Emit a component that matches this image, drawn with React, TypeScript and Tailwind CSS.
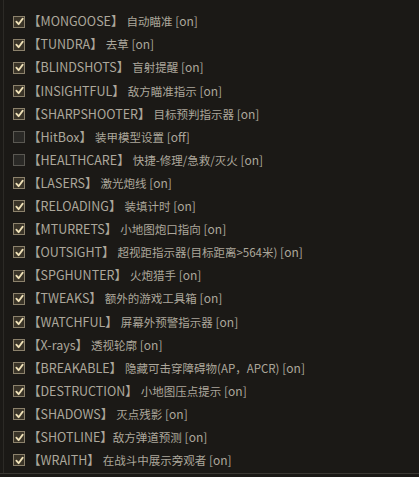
import React from "react";

type Item = { tag: string; label: string; on: boolean; state?: string; tight?: boolean };

const items: Item[] = [
  { tag: "MONGOOSE", label: "自动瞄准", on: true },
  { tag: "TUNDRA", label: "去草", on: true },
  { tag: "BLINDSHOTS", label: "盲射提醒", on: true },
  { tag: "INSIGHTFUL", label: "敌方瞄准指示", on: true },
  { tag: "SHARPSHOOTER", label: "目标预判指示器", on: true },
  { tag: "HitBox", label: "装甲模型设置", on: false, state: "off" },
  { tag: "HEALTHCARE", label: "快捷-修理/急救/灭火", on: false },
  { tag: "LASERS", label: "激光炮线", on: true },
  { tag: "RELOADING", label: "装填计时", on: true },
  { tag: "MTURRETS", label: "小地图炮口指向", on: true },
  { tag: "OUTSIGHT", label: "超视距指示器(目标距离>564米)", on: true },
  { tag: "SPGHUNTER", label: "火炮猎手", on: true },
  { tag: "TWEAKS", label: "额外的游戏工具箱", on: true },
  { tag: "WATCHFUL", label: "屏幕外预警指示器", on: true },
  { tag: "X-rays", label: "透视轮廓", on: true },
  { tag: "BREAKABLE", label: "隐藏可击穿障碍物(AP，APCR)", on: true },
  { tag: "DESTRUCTION", label: "小地图压点提示", on: true },
  { tag: "SHADOWS", label: "灭点残影", on: true },
  { tag: "SHOTLINE", label: "敌方弹道预测", on: true, tight: true },
  { tag: "WRAITH", label: "在战斗中展示旁观者", on: true },
];

const cjk = { fontFamily: '"Noto Sans CJK SC", sans-serif' };

function Box({ on }: { on: boolean }) {
  if (!on) {
    return <span className="w-3 h-3 shrink-0 border border-[#5a5852] bg-[#2a2926]" />;
  }
  return (
    <span className="w-3 h-3 shrink-0 border border-[#8c826c] bg-[#3a3428] flex items-center justify-center">
      <svg width="9" height="9" viewBox="0 0 10 10">
        <path d="M1.5 5.2 L4 8 L8.6 1.8" fill="none" stroke="#f0e2b8" strokeWidth="2" strokeLinecap="round" strokeLinejoin="round" />
      </svg>
    </span>
  );
}

export default function App() {
  return (
    <div
      className="w-[419px] h-[477px] bg-[#1b1916] relative overflow-hidden text-[12.5px] text-[#aca79b]"
      style={{ fontFamily: '"Liberation Sans Narrow", "Noto Sans CJK SC", sans-serif' }}
    >
      <div className="absolute left-[3px] top-0 bottom-[4px] w-px bg-[#2c2a26]" />
      <div className="absolute left-0 right-0 bottom-[3px] h-px bg-[#3a3833]" />
      <div className="flex flex-col pt-[10px] pl-[13px]">
        {items.map((it) => (
          <div key={it.tag} className="h-[23.1px] flex items-center gap-[3px] whitespace-nowrap">
            <Box on={it.on} />
            <span className="leading-none">
              <span style={cjk}>【</span>
              {it.tag}
              <span style={cjk}>】</span>
              <span style={cjk} className={it.tight ? "text-[11.5px]" : "text-[11.5px] ml-[3px]"}>
                {it.label}
              </span>
              <span className="text-[12px]">{" "}[{it.state ?? "on"}]</span>
            </span>
          </div>
        ))}
      </div>
    </div>
  );
}
